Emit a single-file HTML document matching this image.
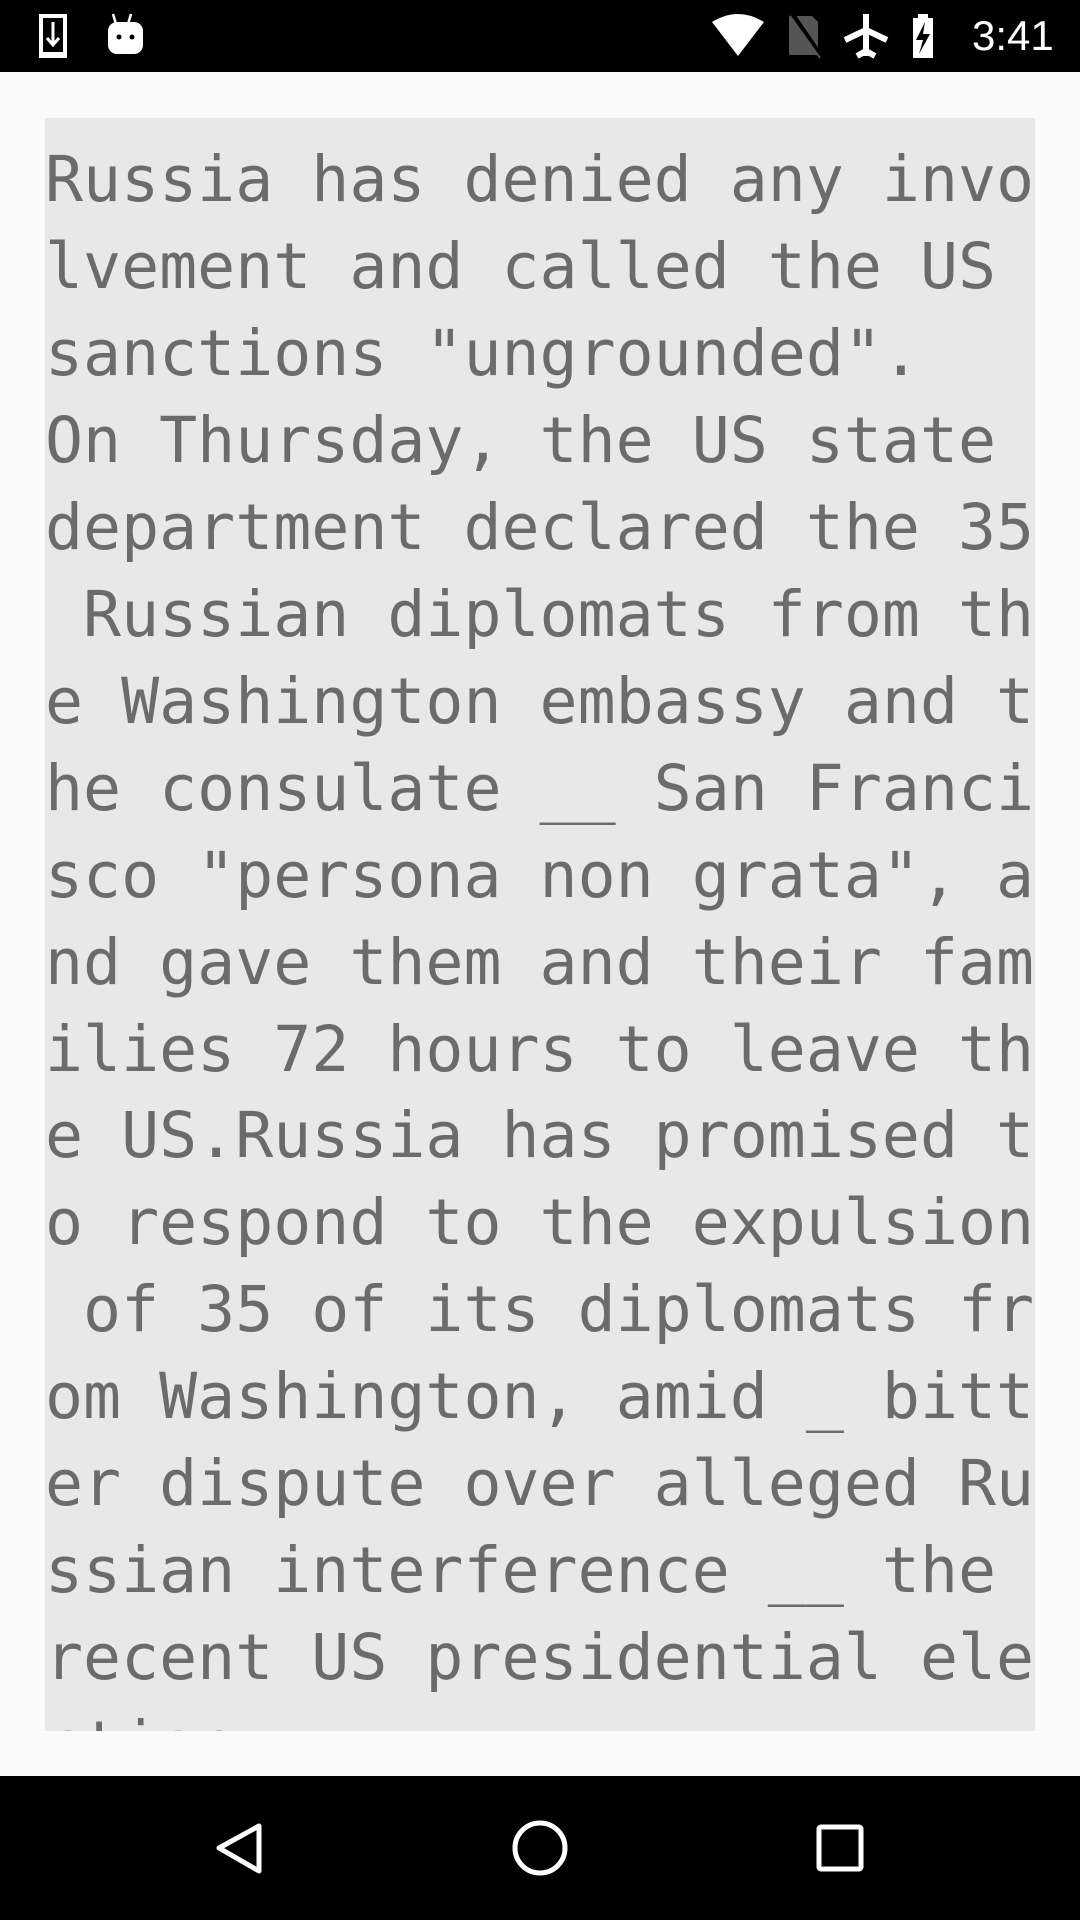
<!DOCTYPE html>
<html><head><meta charset="utf-8"><style>
html,body{margin:0;padding:0;width:1080px;height:1920px;background:#fafafa;overflow:hidden}
.sb{position:absolute;left:0;top:0;width:1080px;height:72px;background:#000}
.nav{position:absolute;left:0;top:1776px;width:1080px;height:144px;background:#000}
.box{position:absolute;left:45px;top:118px;width:990px;height:1613px;background:#e8e8e8;overflow:hidden}
.txt{position:absolute;left:0;top:0;margin:0;font-family:"DejaVu Sans Mono","Liberation Mono",monospace;font-size:63.2px;line-height:86.95px;color:#6b6b6b;white-space:pre;padding-top:18px}
.time{position:absolute;left:972px;top:10px;color:#fff;font-family:"Liberation Sans",sans-serif;font-size:42px;line-height:52px}
</style></head><body>
<div class="sb">
<svg width="1080" height="72" style="position:absolute;left:0;top:0">
<rect x="39" y="14" width="28" height="44" fill="#fff"/>
<rect x="43" y="18" width="20" height="34" fill="#000"/>
<path d="M53 22 V44 M47 38 L53 45 L59 38" stroke="#fff" stroke-width="3" fill="none"/>
<path d="M113 14 L116 24 M131 14 L128 24" stroke="#fff" stroke-width="2.5"/>
<rect x="108" y="22" width="35" height="32" rx="9" fill="#fff"/>
<circle cx="119" cy="37" r="2.5" fill="#000"/><circle cx="132" cy="37" r="2.5" fill="#000"/>
<path d="M712 22 Q738 6 764 22 L738 56 Z" fill="#fff"/>
<path d="M789 16 H812 L818 22 V55 H789 Z" fill="#555"/>
<path d="M792 14 L823 59" stroke="#000" stroke-width="5"/><path d="M790 16 L820 58" stroke="#555" stroke-width="2"/>
<path d="M866 14 L866 56 M845 40 L866 30 L887 40 M857 56 L866 51 L875 56" stroke="#fff" stroke-width="6" fill="none" stroke-linejoin="round"/>
<rect x="918" y="14" width="10" height="5" fill="#fff"/>
<rect x="913" y="18" width="20" height="40" fill="#fff"/>
<path d="M925 22 L916 40 H923 L919 54 L930 34 H923 Z" fill="#000"/>
</svg>
<div class="time">3:41</div>
</div>
<div class="box"><pre class="txt">Russia has denied any invo
lvement and called the US 
sanctions "ungrounded".
On Thursday, the US state 
department declared the 35
 Russian diplomats from th
e Washington embassy and t
he consulate __ San Franci
sco "persona non grata", a
nd gave them and their fam
ilies 72 hours to leave th
e US.Russia has promised t
o respond to the expulsion
 of 35 of its diplomats fr
om Washington, amid _ bitt
er dispute over alleged Ru
ssian interference __ the 
recent US presidential ele
ction.</pre></div>
<div class="nav">
<svg width="1080" height="144" style="position:absolute;left:0;top:0">
<path d="M259 50 L219 72 L259 95 Z" fill="none" stroke="#fff" stroke-width="5" stroke-linejoin="round"/>
<circle cx="540" cy="72" r="25" fill="none" stroke="#fff" stroke-width="5"/>
<rect x="819" y="51" width="42" height="42" rx="2" fill="none" stroke="#fff" stroke-width="5"/>
</svg>
</div>
</body></html>
